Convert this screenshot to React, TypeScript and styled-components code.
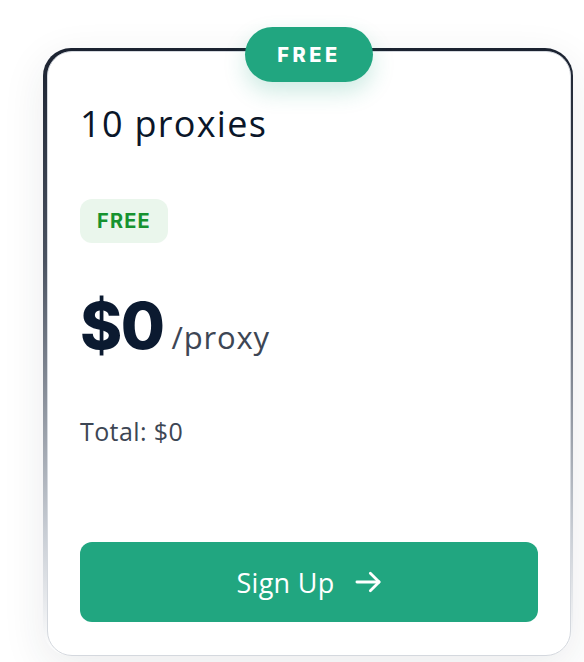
import React from "react";
import styled, { createGlobalStyle } from "styled-components";

const Global = createGlobalStyle`
  html, body { margin: 0; padding: 0; background: #ffffff; }
  body { font-family: "Open Sans", "Noto Sans", "Liberation Sans", sans-serif; }
`;

const Page = styled.div`
  width: 584px;
  height: 662px;
  padding: 48px 11px 0 43px;
  box-sizing: border-box;
  overflow: hidden;
`;

const Frame = styled.div`
  position: relative;
  width: 530px;
  height: 608px;
  box-sizing: border-box;
  padding: 3px 2px 0 4px;
  border-radius: 28px;
  background: linear-gradient(to bottom, #1b2230 0%, #4b5361 35%, #c9ced5 80%, rgba(220,224,229,0) 100%);
  box-shadow: 0 12px 44px rgba(30, 40, 60, 0.09);
`;

const Card = styled.div`
  height: 100%;
  box-sizing: border-box;
  background: #ffffff;
  border: 1.5px solid #d4d8de;
  border-radius: 25px;
  padding: 50px 32px 33px 32px;
  display: flex;
  flex-direction: column;
  align-items: flex-start;
`;

const TopPill = styled.div`
  position: absolute;
  top: -21px;
  left: 50%;
  transform: translateX(-50%);
  margin-left: 1px;
  width: 128px;
  height: 55px;
  border-radius: 28px;
  background: #21a680;
  color: #ffffff;
  font-family: Inter, "Open Sans", sans-serif;
  font-weight: 800;
  font-size: 20px;
  letter-spacing: 3.6px;
  display: flex;
  align-items: center;
  justify-content: center;
  box-shadow: 0 10px 22px rgba(33, 166, 128, 0.22);
`;

const Title = styled.h2`
  margin: 0;
  font-size: 36px;
  font-weight: 500;
  color: #0a1629;
  line-height: 44px;
  letter-spacing: 1.3px;
`;

const Tag = styled.span`
  margin-top: 53px;
  height: 44px;
  width: 88px;
  box-sizing: border-box;
  display: inline-flex;
  align-items: center;
  justify-content: center;
  border-radius: 12px;
  background: #eaf6ec;
  color: #16922f;
  font-family: Inter, "Open Sans", sans-serif;
  font-weight: 700;
  font-size: 20px;
  letter-spacing: 1.2px;
`;

const PriceRow = styled.div`
  margin-top: 48px;
  display: flex;
  align-items: baseline;
  gap: 8px;
`;

const Price = styled.span`
  font-family: Inter, "Open Sans", sans-serif;
  font-size: 64px;
  font-weight: 800;
  color: #0b1a30;
  line-height: 70px;
  letter-spacing: -1.5px;
`;

const Unit = styled.span`
  font-size: 31px;
  color: #3d4654;
  font-weight: 400;
  letter-spacing: 0.8px;
`;

const Total = styled.div`
  margin-top: 55px;
  font-size: 25px;
  color: #3d4654;
  line-height: 30px;
  letter-spacing: 0.4px;
`;

const Button = styled.button`
  margin-top: auto;
  width: 100%;
  height: 80px;
  border: none;
  border-radius: 12px;
  background: #21a680;
  color: #ffffff;
  font-family: inherit;
  font-size: 27px;
  font-weight: 400;
  letter-spacing: 0.3px;
  display: flex;
  align-items: center;
  justify-content: center;
  gap: 19px;
  cursor: pointer;
`;

const Arrow = () => (
  <svg width="28" height="28" viewBox="0 0 24 24" fill="none" stroke="#ffffff" strokeWidth="2.4" strokeLinecap="round" strokeLinejoin="round">
    <path d="M2.5 12h19" />
    <path d="M14 4.5l7.5 7.5-7.5 7.5" />
  </svg>
);

export default function App() {
  return (
    <>
      <Global />
      <Page>
        <Frame>
          <TopPill>FREE</TopPill>
          <Card>
            <Title>10 proxies</Title>
            <Tag>FREE</Tag>
            <PriceRow>
              <Price>$0</Price>
              <Unit>/proxy</Unit>
            </PriceRow>
            <Total>Total: $0</Total>
            <Button>
              <span>Sign Up</span>
              <Arrow />
            </Button>
          </Card>
        </Frame>
      </Page>
    </>
  );
}
